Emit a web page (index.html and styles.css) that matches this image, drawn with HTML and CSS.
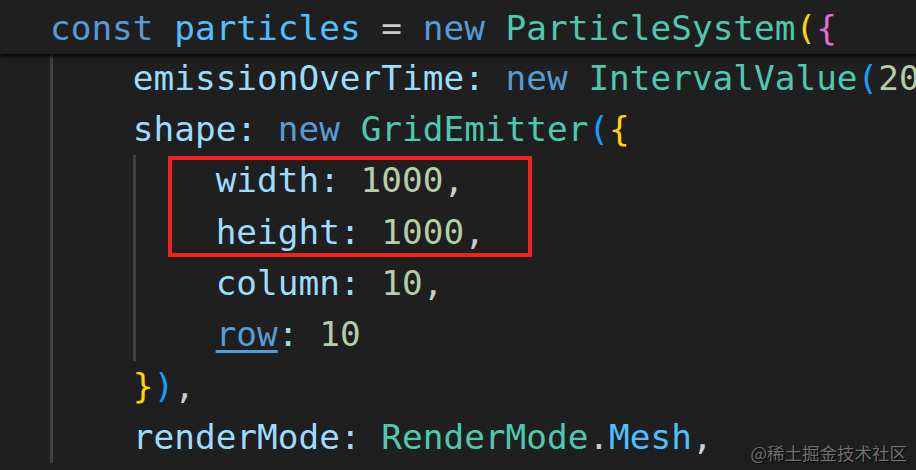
FILE: index.html
```html
<!DOCTYPE html>
<html>
<head>
<meta charset="utf-8">
<link rel="stylesheet" href="styles.css">
</head>
<body>
<div class="editor">
  <div class="sticky">
    <div class="line"><span class="kw">const</span> <span class="cv">particles</span> <span class="op">=</span> <span class="kw">new</span> <span class="ty">ParticleSystem</span><span class="b1">(</span><span class="b2">{</span></div>
  </div>
  <div class="code">
    <div class="block">
      <div class="line"><span class="pr">emissionOverTime</span><span class="pr">:</span> <span class="kw">new</span> <span class="ty">IntervalValue</span><span class="b3">(</span><span class="nu">20</span></div>
      <div class="line"><span class="pr">shape</span><span class="pr">:</span> <span class="kw">new</span> <span class="ty">GridEmitter</span><span class="b3">(</span><span class="b1">{</span></div>
      <div class="block inner">
        <div class="line"><span class="pr">width</span><span class="pr">:</span> <span class="nu">1000</span><span class="op">,</span></div>
        <div class="line"><span class="pr">height</span><span class="pr">:</span> <span class="nu">1000</span><span class="op">,</span></div>
        <div class="line"><span class="pr">column</span><span class="pr">:</span> <span class="nu">10</span><span class="op">,</span></div>
        <div class="line"><span class="lnk">row</span><span class="pr">:</span> <span class="nu">10</span></div>
      </div>
      <div class="line"><span class="b1">}</span><span class="b3">)</span><span class="op">,</span></div>
      <div class="line"><span class="pr">renderMode</span><span class="pr">:</span> <span class="ty">RenderMode</span><span class="op">.</span><span class="cv">Mesh</span><span class="op">,</span></div>
    </div>
  </div>
  <div class="mark"></div>
  <div class="watermark">@稀土掘金技术社区</div>
</div>
</body>
</html>
```
FILE: styles.css
```css
html, body {
  margin: 0;
  padding: 0;
  background: #1f1f1f;
}
.editor {
  position: relative;
  width: 916px;
  height: 470px;
  overflow: hidden;
  background: #1f1f1f;
  font-family: "DejaVu Sans Mono", monospace;
  font-size: 34.4px;
  color: #d4d4d4;
}
.line {
  height: 51.35px;
  line-height: 51.35px;
  white-space: pre;
}
.sticky {
  position: relative;
  z-index: 2;
  height: 54px;
  box-sizing: border-box;
  padding-top: 3px;
  padding-left: 50px;
  background: #1f1f1f;
  box-shadow: 0 2px 4px #000;
}
.code {
  margin-top: -1.5px;
  padding-left: 50px;
}
.block {
  border-left: 3px solid #404040;
  padding-left: calc(4ch - 3px);
}
.inner {
  padding-top: 3px;
  margin-bottom: 4px;
}
.inner .line:first-child {
  margin-top: -3px;
}
.inner .line:last-child {
  margin-bottom: -4px;
}
.kw { color: #569cd6; }
.cv { color: #4fc1ff; }
.op { color: #cccccc; }
.ty { color: #4ec9b0; }
.pr { color: #9cdcfe; }
.nu { color: #b5cea8; }
.b1 { color: #ffd700; }
.b2 { color: #da70d6; }
.b3 { color: #179fff; }
.lnk {
  color: #569cd6;
  text-decoration: underline;
  text-decoration-thickness: 3px;
  text-underline-offset: 4px;
}
.mark {
  position: absolute;
  left: 168px;
  top: 156px;
  width: 364px;
  height: 101px;
  box-sizing: border-box;
  border: 4px solid #f5211a;
}
.watermark {
  position: absolute;
  right: 9px;
  bottom: 6px;
  font-family: "Noto Sans CJK SC", sans-serif;
  font-size: 17.5px;
  line-height: 22px;
  color: #707070;
  text-shadow: 1px 1px 1px #000;
}
```
